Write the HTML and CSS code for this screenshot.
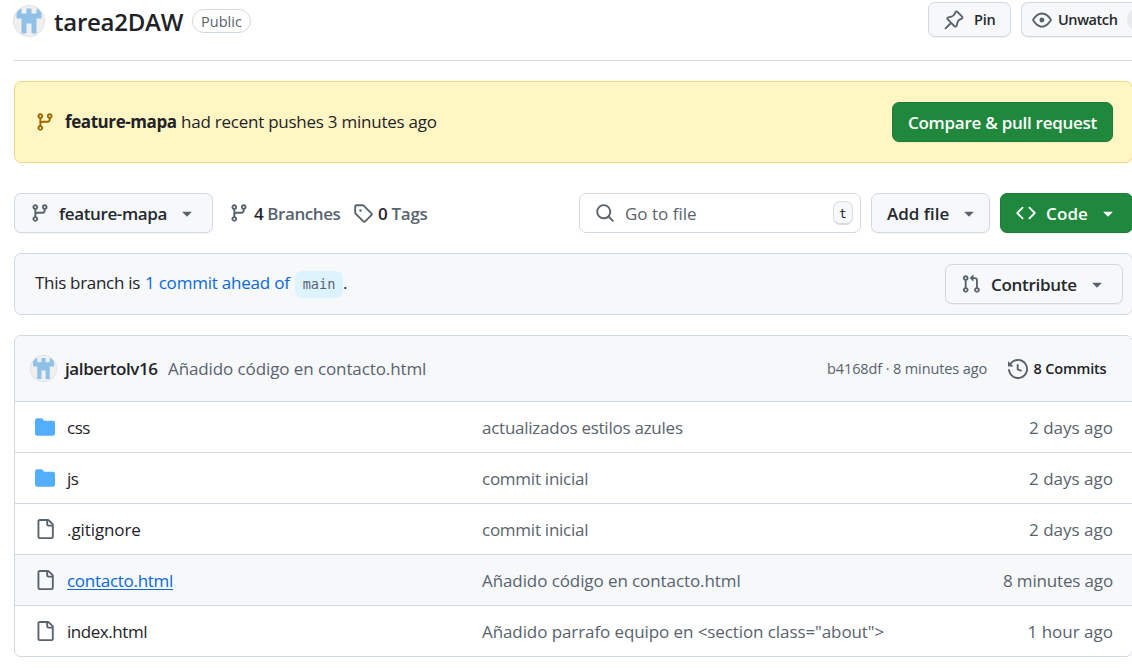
FILE: index.html
```html
<!DOCTYPE html>
<html lang="en">
<head>
<meta charset="utf-8">
<title>tarea2DAW</title>
<link rel="stylesheet" href="styles.css">
</head>
<body>
<svg class="defs" width="0" height="0">
  <symbol id="branch" viewBox="0 0 16 16"><path d="M9.5 3.25a2.25 2.25 0 1 1 3 2.122V6A2.5 2.5 0 0 1 10 8.5H6a1 1 0 0 0-1 1v1.128a2.251 2.251 0 1 1-1.5 0V5.372a2.25 2.25 0 1 1 1.5 0v1.836A2.493 2.493 0 0 1 6 7h4a1 1 0 0 0 1-1v-.628A2.25 2.25 0 0 1 9.5 3.25Zm-6 0a.75.75 0 1 0 1.5 0 .75.75 0 0 0-1.5 0Zm8.25-.75a.75.75 0 1 0 0 1.5.75.75 0 0 0 0-1.5ZM4.25 12a.75.75 0 1 0 0 1.5.75.75 0 0 0 0-1.5Z"/></symbol>
  <symbol id="caret" viewBox="0 0 16 16"><path d="m4.427 7.427 3.396 3.396a.25.25 0 0 0 .354 0l3.396-3.396A.25.25 0 0 0 11.396 7H4.604a.25.25 0 0 0-.177.427Z"/></symbol>
  <symbol id="folder" viewBox="0 0 16 16"><path d="M1.75 1A1.75 1.75 0 0 0 0 2.75v10.5C0 14.216.784 15 1.75 15h12.5A1.75 1.75 0 0 0 16 13.25v-8.5A1.75 1.75 0 0 0 14.25 3H7.5a.25.25 0 0 1-.2-.1l-.9-1.2C6.07 1.26 5.55 1 5 1H1.75Z"/></symbol>
  <symbol id="file" viewBox="0 0 16 16"><path d="M2 1.75C2 .784 2.784 0 3.75 0h6.586c.464 0 .909.184 1.237.513l2.914 2.914c.329.328.513.773.513 1.237v9.586A1.75 1.75 0 0 1 13.25 16h-9.5A1.75 1.75 0 0 1 2 14.25Zm1.75-.25a.25.25 0 0 0-.25.25v12.5c0 .138.112.25.25.25h9.5a.25.25 0 0 0 .25-.25V6h-2.75A1.75 1.75 0 0 1 9 4.25V1.5Zm6.75.062V4.25c0 .138.112.25.25.25h2.688l-.011-.013-2.914-2.914-.013-.011Z"/></symbol>
  <symbol id="identicon" viewBox="0 0 30 30"><path fill="#f0f0f0" d="M0 0h30v30H0z"/><path fill="#8fc1e8" d="M2.5 2.5h5v5h5v-5h5v5h5v-5h5v10h-5v15h-5v-10h-5v10h-5v-15h-5z"/></symbol>
</svg>
<main class="page">
  <header class="head">
    <span class="avatar avatar-lg"><svg><use href="#identicon"/></svg></span>
    <h1 class="title">tarea2DAW</h1>
    <span class="label">Public</span>
    <div class="head-actions">
      <button class="btn btn-sm pin"><svg class="icon" viewBox="0 0 16 16"><path d="m11.294.984 3.722 3.722a1.75 1.75 0 0 1-.504 2.826l-1.327.613a3.089 3.089 0 0 0-1.707 2.084l-.584 2.454c-.317 1.332-1.972 1.8-2.94.832L5.75 11.311 1.78 15.28a.749.749 0 1 1-1.06-1.06l3.969-3.97-2.204-2.204c-.968-.968-.5-2.623.832-2.94l2.454-.584a3.08 3.08 0 0 0 2.084-1.707l.613-1.327a1.75 1.75 0 0 1 2.826-.504ZM6.283 9.723l2.732 2.731a.25.25 0 0 0 .42-.119l.584-2.454a4.586 4.586 0 0 1 2.537-3.098l1.328-.613a.25.25 0 0 0 .072-.404l-3.722-3.722a.25.25 0 0 0-.404.072l-.613 1.328a4.584 4.584 0 0 1-3.098 2.537l-2.454.584a.25.25 0 0 0-.119.42l2.731 2.732Z"/></svg><span>Pin</span></button>
      <button class="btn btn-sm watch"><svg class="icon" viewBox="0 0 16 16"><path d="M8 2c1.981 0 3.671.992 4.933 2.078 1.27 1.091 2.187 2.345 2.637 3.023a1.62 1.62 0 0 1 0 1.798c-.45.678-1.367 1.932-2.637 3.023C11.67 13.008 9.981 14 8 14c-1.981 0-3.671-.992-4.933-2.078C1.797 10.83.88 9.576.43 8.898a1.62 1.62 0 0 1 0-1.798c.45-.677 1.367-1.931 2.637-3.022C4.33 2.992 6.019 2 8 2ZM1.679 7.932a.12.12 0 0 0 0 .136c.411.622 1.241 1.75 2.366 2.717C5.176 11.758 6.527 12.5 8 12.5c1.473 0 2.825-.742 3.955-1.715 1.124-.967 1.954-2.096 2.366-2.717a.12.12 0 0 0 0-.136c-.412-.621-1.242-1.75-2.366-2.717C10.824 4.242 9.473 3.5 8 3.5c-1.473 0-2.825.742-3.955 1.715-1.124.967-1.954 2.096-2.366 2.717ZM8 10a2 2 0 1 1-.001-3.999A2 2 0 0 1 8 10Z"/></svg><span>Unwatch</span><i class="counter"></i></button>
    </div>
  </header>

  <section class="flash">
    <svg class="icon"><use href="#branch"/></svg>
    <p><strong>feature-mapa</strong><span class="pushed">had recent pushes 3 minutes ago</span></p>
    <button class="btn btn-primary compare"><span>Compare &amp; pull request</span></button>
  </section>

  <nav class="toolbar">
    <button class="btn branch-btn"><svg class="icon"><use href="#branch"/></svg><span>feature-mapa</span><svg class="icon caret"><use href="#caret"/></svg></button>
    <a class="stat branches"><svg class="icon"><use href="#branch"/></svg><span><b>4</b> Branches</span></a>
    <a class="stat tags"><svg class="icon" viewBox="0 0 16 16"><path d="M1 7.775V2.75C1 1.784 1.784 1 2.75 1h5.025c.464 0 .91.184 1.238.513l6.25 6.25a1.75 1.75 0 0 1 0 2.474l-5.026 5.026a1.75 1.75 0 0 1-2.474 0l-6.25-6.25A1.752 1.752 0 0 1 1 7.775Zm1.5 0c0 .066.026.13.073.177l6.25 6.25a.25.25 0 0 0 .354 0l5.025-5.025a.25.25 0 0 0 0-.354l-6.25-6.25a.25.25 0 0 0-.177-.073H2.75a.25.25 0 0 0-.25.25ZM6 5a1 1 0 1 1 0 2 1 1 0 0 1 0-2Z"/></svg><span><b>0</b> Tags</span></a>
    <div class="search"><svg class="icon" viewBox="0 0 16 16"><path d="M10.68 11.74a6 6 0 0 1-7.922-8.982 6 6 0 0 1 8.982 7.922l3.04 3.04a.749.749 0 0 1-.326 1.275.749.749 0 0 1-.734-.215ZM11.5 7a4.499 4.499 0 1 0-8.997 0A4.499 4.499 0 0 0 11.5 7Z"/></svg><span>Go to file</span><kbd>t</kbd></div>
    <button class="btn add"><span>Add file</span><svg class="icon caret"><use href="#caret"/></svg></button>
    <button class="btn btn-primary code"><svg class="icon" viewBox="0 0 16 16"><path d="m11.28 3.22 4.25 4.25a.75.75 0 0 1 0 1.06l-4.25 4.25a.749.749 0 0 1-1.275-.326.749.749 0 0 1 .215-.734L13.94 8l-3.72-3.72a.749.749 0 0 1 .326-1.275.749.749 0 0 1 .734.215Zm-6.56 0a.751.751 0 0 1 1.042.018.751.751 0 0 1 .018 1.042L2.06 8l3.72 3.72a.749.749 0 0 1-.326 1.275.749.749 0 0 1-.734-.215L.47 8.53a.75.75 0 0 1 0-1.06Z"/></svg><span>Code</span><svg class="icon caret"><use href="#caret"/></svg></button>
  </nav>

  <section class="ahead">
    <p><span class="ahead-text">This branch is</span><a class="ahead-link">1 commit ahead of</a><code>main</code><span>.</span></p>
    <button class="btn contribute"><svg class="icon" viewBox="0 0 16 16"><path d="M1.5 3.25a2.25 2.25 0 1 1 3 2.122v5.256a2.251 2.251 0 1 1-1.5 0V5.372A2.25 2.25 0 0 1 1.5 3.25Zm5.677-.177L9.573.677A.25.25 0 0 1 10 .854V2.5h1A2.5 2.5 0 0 1 13.5 5v5.628a2.251 2.251 0 1 1-1.5 0V5a1 1 0 0 0-1-1h-1v1.646a.25.25 0 0 1-.427.177L7.177 3.427a.25.25 0 0 1 0-.354ZM3.75 2.5a.75.75 0 1 0 0 1.5.75.75 0 0 0 0-1.5Zm0 9.5a.75.75 0 1 0 0 1.5.75.75 0 0 0 0-1.5Zm8.25.75a.75.75 0 1 0 1.5 0 .75.75 0 0 0-1.5 0Z"/></svg><span>Contribute</span><svg class="icon caret"><use href="#caret"/></svg></button>
  </section>

  <section class="files">
    <div class="commit">
      <span class="avatar avatar-sm"><svg><use href="#identicon"/></svg></span>
      <b class="author">jalbertolv16</b>
      <span class="message">Añadido código en contacto.html</span>
      <span class="hash">b4168df · 8 minutes ago</span>
      <a class="history"><svg class="icon" viewBox="0 0 16 16"><path d="m.427 1.927 1.215 1.215a8.002 8.002 0 1 1-1.6 5.685.75.75 0 1 1 1.493-.154 6.5 6.5 0 1 0 1.18-4.458l1.358 1.358A.25.25 0 0 1 3.896 6H.25A.25.25 0 0 1 0 5.75V2.104a.25.25 0 0 1 .427-.177ZM7.75 4a.75.75 0 0 1 .75.75v2.992l2.028.812a.75.75 0 0 1-.557 1.392l-2.5-1A.751.751 0 0 1 7 8.25v-3.5A.75.75 0 0 1 7.75 4Z"/></svg><span>8 Commits</span></a>
    </div>
    <div class="row"><svg class="icon folder"><use href="#folder"/></svg><a class="tight">css</a><span class="snug">actualizados estilos azules</span><time>2 days ago</time></div>
    <div class="row"><svg class="icon folder"><use href="#folder"/></svg><a class="tight">js</a><span class="snug">commit inicial</span><time>2 days ago</time></div>
    <div class="row"><svg class="icon"><use href="#file"/></svg><a class="loose">.gitignore</a><span class="snug">commit inicial</span><time>2 days ago</time></div>
    <div class="row hovered"><svg class="icon"><use href="#file"/></svg><a>contacto.html</a><span class="loose">Añadido código en contacto.html</span><time class="minutes">8 minutes ago</time></div>
    <div class="row"><svg class="icon"><use href="#file"/></svg><a class="tight">index.html</a><span class="loose">Añadido parrafo equipo en &lt;section class="about"&gt;</span><time>1 hour ago</time></div>
  </section>
</main>
</body>
</html>
```
FILE: styles.css
```css
* { box-sizing: border-box; }
html, body { height: 100%; overflow: hidden; }
body { margin: 0; background: #fff; color: #1f2328; font: 17px/24px "Open Sans", "Noto Sans", sans-serif; }
p, h1 { margin: 0; }
.defs { display: block; height: 0; }
.page { width: 1133px; padding-left: 14px; }
.icon { display: block; flex: none; width: 20px; height: 20px; fill: #59636e; }
span, a, b, time, strong { white-space: nowrap; }

.btn { display: flex; align-items: center; flex: none; height: 40px; margin: 0; padding: 0 15px; border: 1px solid #d1d9e0; border-radius: 7px; background: #f6f8fa; color: #25292e; font: inherit; font-weight: 600; box-shadow: 0 1px 0 #1f23280a; }
.btn span, .stat span, .search span { padding-top: 2px; }
.btn-primary { background: #1f883d; border-color: #1c7c38; color: #fff; }
.btn-primary .icon { fill: #fff; }
.btn .caret { margin-left: auto; }

.avatar { display: block; flex: none; border-radius: 50%; overflow: hidden; border: 1px solid #d9dcdf; background: #f0f0f0; }
.avatar svg { display: block; width: 100%; height: 100%; }
.avatar-lg { width: 32px; height: 32px; margin: 0 9px 0 -1px; }
.avatar-sm { width: 27px; height: 27px; margin-right: 8px; }

.head { display: flex; align-items: center; height: 61px; padding-bottom: 18px; border-bottom: 1px solid #d1d9e0; }
.title { width: 129px; padding-top: 2px; font-size: 24px; line-height: 32px; font-weight: 550; letter-spacing: -.25px; }
.label { display: flex; align-items: center; justify-content: center; width: 59px; height: 24px; margin-left: 9px; padding-top: 1px; border: 1px solid #d1d9e0; border-radius: 12px; color: #59636e; font-size: 14.5px; font-weight: 500; line-height: 20px; }
.head-actions { display: flex; gap: 10px; margin: -3px 0 0 auto; }
.btn-sm { height: 35px; font-size: 14.5px; }
.btn-sm span { padding-top: 0; }
.pin { width: 83px; }
.pin span { margin-left: 10px; letter-spacing: -.23px; }
.watch { width: 112px; padding-left: 10px; padding-right: 0; border-right: 0; border-radius: 7px 0 0 7px; overflow: hidden; }
.watch span { margin-left: 6px; letter-spacing: -.42px; }
.counter { flex: none; width: 30px; height: 23px; margin-left: 10px; border-radius: 12px; background: #e7eaed; }

.flash { display: flex; align-items: center; height: 82px; margin-top: 20px; padding: 0 19px 0 20px; border: 1px solid #eed888; border-radius: 7px; background: #fff6c4; }
.flash .icon { fill: #9a6700; }
.flash p { display: flex; margin-left: 10px; }
.flash strong { width: 116px; letter-spacing: -.42px; }
.pushed { letter-spacing: -.24px; }
.compare { width: 221px; margin-left: auto; letter-spacing: -.27px; }

.toolbar { display: flex; align-items: center; height: 40px; margin-top: 30px; }
.branch-btn { width: 199px; }
.branch-btn span { margin-left: 9px; letter-spacing: -.37px; }
.stat { display: flex; align-items: center; color: #59636e; font-weight: 600; }
.stat b { color: #1f2328; font-weight: 600; }
.branches { width: 124px; margin-left: 16px; letter-spacing: -.42px; }
.branches span { margin-left: 5px; }
.tags { letter-spacing: -.3px; }
.tags span { margin-left: 5px; }
.search { display: flex; align-items: center; width: 282px; height: 40px; margin-left: auto; padding: 0 7px 0 15px; border: 1px solid #d1d9e0; border-radius: 7px; color: #59636e; }
.search span { margin-left: 10px; }
kbd { display: flex; align-items: center; justify-content: center; width: 20px; height: 24px; margin-left: auto; padding-top: 2px; border: 1px solid #d9dee3; border-bottom-width: 2px; border-radius: 7px; background: #f6f8fa; color: #1f2328; font: 13px/16px "DejaVu Sans Mono", monospace; }
.add { width: 119px; margin-left: 10px; padding-right: 10px; }
.code { width: 133px; margin-left: 10px; padding-right: 14px; }
.code span { margin-left: 10px; letter-spacing: .12px; }

.ahead { display: flex; align-items: center; height: 62px; margin-top: 20px; padding: 0 9px 0 20px; border: 1px solid #d1d9e0; border-radius: 7px; background: #f6f8fa; }
.ahead p { display: flex; align-items: center; }
.ahead p span, .ahead p a { padding-bottom: 2px; }
.ahead-text { width: 110px; letter-spacing: -.3px; }
.ahead-link { width: 150px; color: #0969da; letter-spacing: -.22px; }
code { width: 48px; height: 27px; border-radius: 7px; background: #ddf4ff; color: #59636e; font: 13.6px/27px "DejaVu Sans Mono", monospace; text-align: center; }
.contribute { width: 178px; margin-left: auto; }
.contribute span { margin-left: 10px; letter-spacing: -.3px; }

.files { margin-top: 20px; border: 1px solid #d1d9e0; border-radius: 7px; overflow: hidden; }
.commit { display: flex; align-items: center; height: 65px; padding: 0 25px 0 15px; background: #f6f8fa; }
.author { width: 103px; font-weight: 600; letter-spacing: -.4px; }
.message { color: #59636e; letter-spacing: -.1px; }
.hash { margin-left: auto; color: #59636e; font-size: 14.5px; letter-spacing: -.12px; }
.history { display: flex; align-items: center; width: 99px; margin-left: 21px; font-size: 14.5px; font-weight: 600; letter-spacing: -.18px; }
.history span { margin-left: 5.5px; }
.row { display: grid; grid-template-columns: 32px 415px 1fr auto; align-items: center; height: 51px; padding: 0 19px 0 20px; border-top: 1px solid #d1d9e0; color: #59636e; }
.row a, .row span, .row time { padding-top: 2px; }
.row a { color: #1f2328; letter-spacing: -.28px; }
.row .tight { letter-spacing: -.45px; }
.row .snug { letter-spacing: -.25px; }
.row .loose { letter-spacing: -.09px; }
.minutes { letter-spacing: -.16px; }
.folder { fill: #54aeff; }
.hovered { background: #f6f8fa; }
.hovered a { color: #0969da; text-decoration: underline; text-underline-offset: 2px; text-decoration-thickness: 1px; }
```
